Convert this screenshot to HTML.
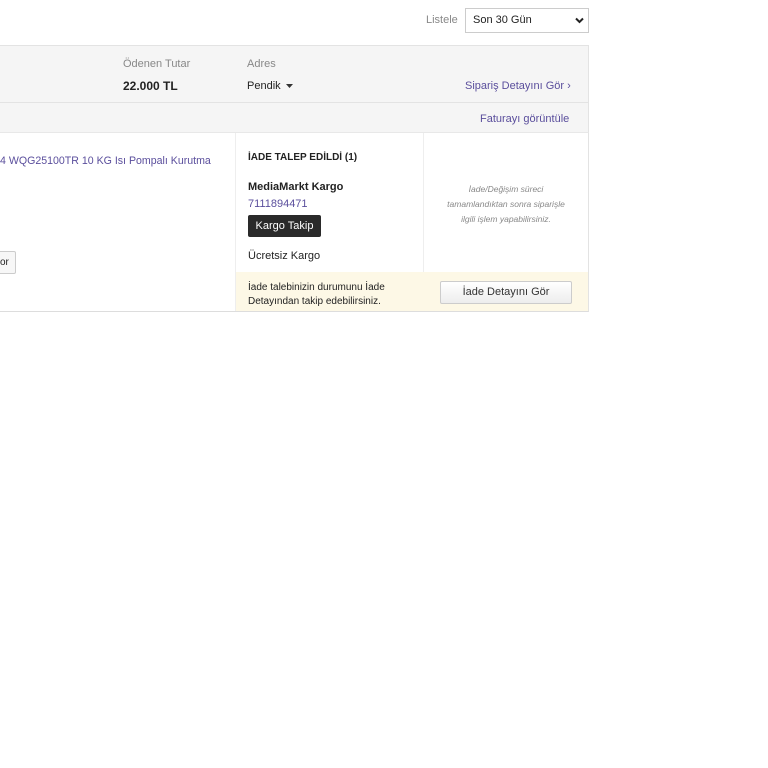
<!DOCTYPE html>
<html><head><meta charset="utf-8"><style>
body{margin:0;width:768px;height:768px;background:#fff;font-family:"Liberation Sans","DejaVu Sans",sans-serif;font-size:11px;color:#222;position:relative;overflow:hidden}
.a{position:absolute;white-space:nowrap}
.p{color:#5a4e9c}
</style></head><body>
<div class="a" style="left:426px;top:14px;color:#888">Listele</div>
<div class="a" style="left:465px;top:8px;width:122px;height:23px;border:1px solid #ccc;background:#fff"></div>
<div class="a" style="left:473px;top:14px;color:#222">Son 30 Gün</div>
<svg class="a" style="left:575px;top:17px" width="9" height="7"><path d="M1 1.5L4.5 5L8 1.5" stroke="#222" stroke-width="2" fill="none"/></svg>

<div class="a" style="left:0;top:45px;width:588px;height:57px;background:#f5f5f5;border-top:1px solid #e3e3e3;border-right:1px solid #e3e3e3"></div>
<div class="a" style="left:0;top:102px;width:588px;height:30px;background:#f5f5f5;border-top:1px solid #e3e3e3;border-right:1px solid #e3e3e3"></div>
<div class="a" style="left:0;top:132px;width:588px;height:178px;background:#fff;border-top:1px solid #e8e8e8;border-right:1px solid #e3e3e3;border-bottom:1px solid #ddd"></div>

<div class="a" style="left:123px;top:58px;color:#888">Ödenen Tutar</div>
<div class="a" style="left:123px;top:79px;font-weight:bold;font-size:12px">22.000 TL</div>
<div class="a" style="left:247px;top:58px;color:#888">Adres</div>
<div class="a" style="left:247px;top:80px">Pendik</div>
<svg class="a" style="left:286px;top:84px" width="7" height="4"><path d="M0 0H7L3.5 4Z" fill="#333"/></svg>
<div class="a p" style="left:465px;top:80px">Sipariş Detayını Gör ›</div>
<div class="a p" style="left:480px;top:113px">Faturayı görüntüle</div>

<div class="a p" style="left:0;top:155px;font-size:10.6px">4 WQG25100TR 10 KG Isı Pompalı Kurutma</div>
<div class="a" style="left:-4px;top:251px;width:18px;height:21px;border:1px solid #ccc;background:#f7f7f7;border-radius:2px"></div>
<div class="a" style="left:0;top:257px;font-size:10px">or</div>

<div class="a" style="left:235px;top:133px;width:1px;height:178px;background:#eee"></div>
<div class="a" style="left:423px;top:133px;width:1px;height:139px;background:#eee"></div>
<div class="a" style="left:236px;top:272px;width:352px;height:39px;background:#fdf8e6"></div>

<div class="a" style="left:248px;top:152px;font-weight:bold;font-size:10px">İADE TALEP EDİLDİ (1)</div>
<div class="a" style="left:248px;top:181px;font-weight:bold">MediaMarkt Kargo</div>
<div class="a p" style="left:248px;top:198px">7111894471</div>
<div class="a" style="left:248px;top:215px;width:73px;height:22px;background:#2a2a2a;border-radius:2px;color:#fff;text-align:center;line-height:22px">Kargo Takip</div>
<div class="a" style="left:248px;top:250px">Ücretsiz Kargo</div>
<div class="a" style="left:248px;top:281px;font-size:10px;line-height:14px">İade talebinizin durumunu İade<br>Detayından takip edebilirsiniz.</div>

<div class="a" style="left:424px;top:182px;width:164px;text-align:center;font-style:italic;font-size:8.5px;line-height:15px;color:#888">İade/Değişim süreci<br>tamamlandıktan sonra siparişle<br>ilgili işlem yapabilirsiniz.</div>
<div class="a" style="left:440px;top:281px;width:130px;height:21px;border:1px solid #ccc;border-radius:2px;background:linear-gradient(#fff,#ededed);text-align:center;line-height:21px;color:#333">İade Detayını Gör</div>
</body></html>
